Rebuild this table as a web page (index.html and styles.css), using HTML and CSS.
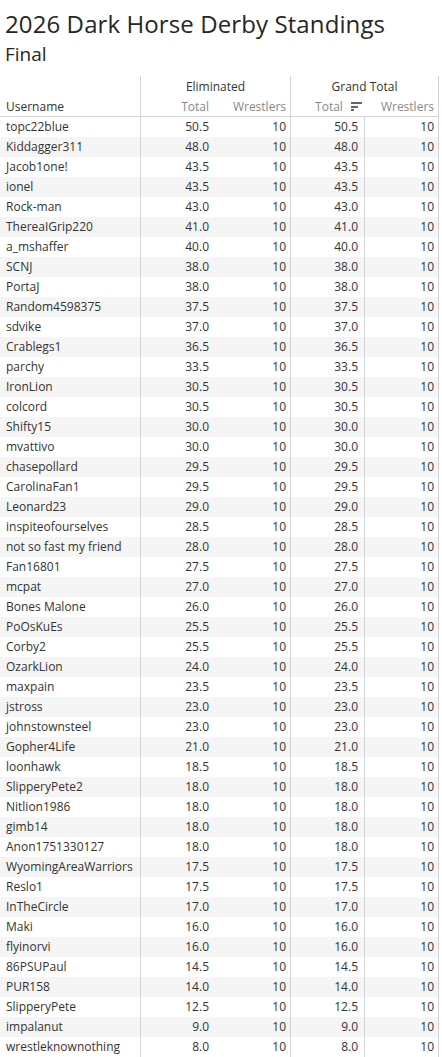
FILE: index.html
```html
<!DOCTYPE html>
<html>
<head>
<meta charset="utf-8">
<link rel="stylesheet" href="styles.css">
</head>
<body>
<h1 class="title">2026 Dark Horse Derby Standings</h1>
<h2 class="subtitle">Final</h2>
<div class="table">
  <div class="hrow top">
    <div class="c c1"></div>
    <div class="grp g1">Eliminated</div>
    <div class="grp g2">Grand Total</div>
  </div>
  <div class="hrow sub">
    <div class="c c1 lbl">Username</div>
    <div class="c c2 sh">Total</div>
    <div class="c c3 sh">Wrestlers</div>
    <div class="c c4 sh nob">Total <span class="sort"><i class="b1"></i><i class="b2"></i><i class="b3"></i></span></div>
    <div class="c c5 sh">Wrestlers</div>
  </div>
  <div id="rows"></div>
</div>
<script src="app.js"></script>
</body>
</html>
```
FILE: app.js
```js
const data = [
["topc22blue","50.5"],["Kiddagger311","48.0"],["Jacob1one!","43.5"],["ionel","43.5"],["Rock-man","43.0"],
["ThereaIGrip220","41.0"],["a_mshaffer","40.0"],["SCNJ","38.0"],["PortaJ","38.0"],["Random4598375","37.5"],
["sdvike","37.0"],["Crablegs1","36.5"],["parchy","33.5"],["IronLion","30.5"],["colcord","30.5"],
["Shifty15","30.0"],["mvattivo","30.0"],["chasepollard","29.5"],["CarolinaFan1","29.5"],["Leonard23","29.0"],
["inspiteofourselves","28.5"],["not so fast my friend","28.0"],["Fan16801","27.5"],["mcpat","27.0"],["Bones Malone","26.0"],
["PoOsKuEs","25.5"],["Corby2","25.5"],["OzarkLion","24.0"],["maxpain","23.5"],["jstross","23.0"],
["johnstownsteel","23.0"],["Gopher4Life","21.0"],["loonhawk","18.5"],["SlipperyPete2","18.0"],["Nitlion1986","18.0"],
["gimb14","18.0"],["Anon1751330127","18.0"],["WyomingAreaWarriors","17.5"],["Reslo1","17.5"],["InTheCircle","17.0"],
["Maki","16.0"],["flyinorvi","16.0"],["86PSUPaul","14.5"],["PUR158","14.0"],["SlipperyPete","12.5"],
["impalanut","9.0"],["wrestleknownothing","8.0"]
];
const rows = document.getElementById('rows');
data.forEach(([n, t]) => {
  const r = document.createElement('div');
  r.className = 'row';
  r.innerHTML = `<div class="c c1 name"></div><div class="c c2">${t}</div><div class="c c3">10</div><div class="c c4">${t}</div><div class="c c5">10</div>`;
  r.firstChild.textContent = n;
  rows.appendChild(r);
});
```
FILE: styles.css
```css
html, body {
  margin: 0;
  padding: 0;
  background: #fff;
}
body {
  font-family: "Open Sans", "Noto Sans", sans-serif;
  color: #333;
  width: 442px;
}
.title {
  margin: 0;
  padding: 8px 0 0 5px;
  height: 32px;
  font-size: 24px;
  letter-spacing: 0.1px;
  font-weight: 400;
  line-height: 32px;
  color: #262626;
}
.subtitle {
  margin: 0;
  padding: 0 0 0 5px;
  height: 36px;
  font-size: 19px;
  font-weight: 400;
  line-height: 28px;
  color: #262626;
}
.table {
  width: 439px;
  font-size: 12px;
}
.hrow, .row {
  display: grid;
  grid-template-columns: 141px 74px 76px 74px 74px;
  height: 20px;
  line-height: 20px;
}
.hrow.top {
  grid-template-columns: 141px 150px 148px;
}
.hrow.top .grp {
  padding-top: 2px;
  line-height: 18px;
}
.hrow.sub {
  line-height: 21px;
}
.c {
  text-align: right;
  padding-right: 6px;
  white-space: nowrap;
  overflow: hidden;
}
.c1 {
  text-align: left;
  padding-left: 6px;
  border-right: 1px solid #d4d4d4;
}
.c3, .c5 {
  border-right: 1px solid #d4d4d4;
  padding-right: 4px;
}
.row .c4 {
  border-right: 1px solid #d4d4d4;
}
.grp {
  text-align: center;
  border-right: 1px solid #d4d4d4;
  color: #333;
}
.hrow.sub {
  border-bottom: 1px solid #d4d4d4;
}
.sh {
  color: #888;
}
.lbl {
  color: #333;
}
.sub .c4 {
  padding-right: 3px;
}
.sort {
  display: inline-flex;
  flex-direction: column;
  gap: 1.5px;
  width: 11px;
  margin-left: 5px;
  vertical-align: middle;
  position: relative;
  top: -1px;
}
.sort i {
  display: block;
  height: 2px;
  background: #666;
}
.sort .b1 { width: 11px; }
.sort .b2 { width: 7px; }
.sort .b3 { width: 3px; }
.row:nth-child(even) {
  background: #f5f5f5;
}
.row:last-child {
  border-bottom: 1px solid #d4d4d4;
}
.name {
  color: #333;
}
```
